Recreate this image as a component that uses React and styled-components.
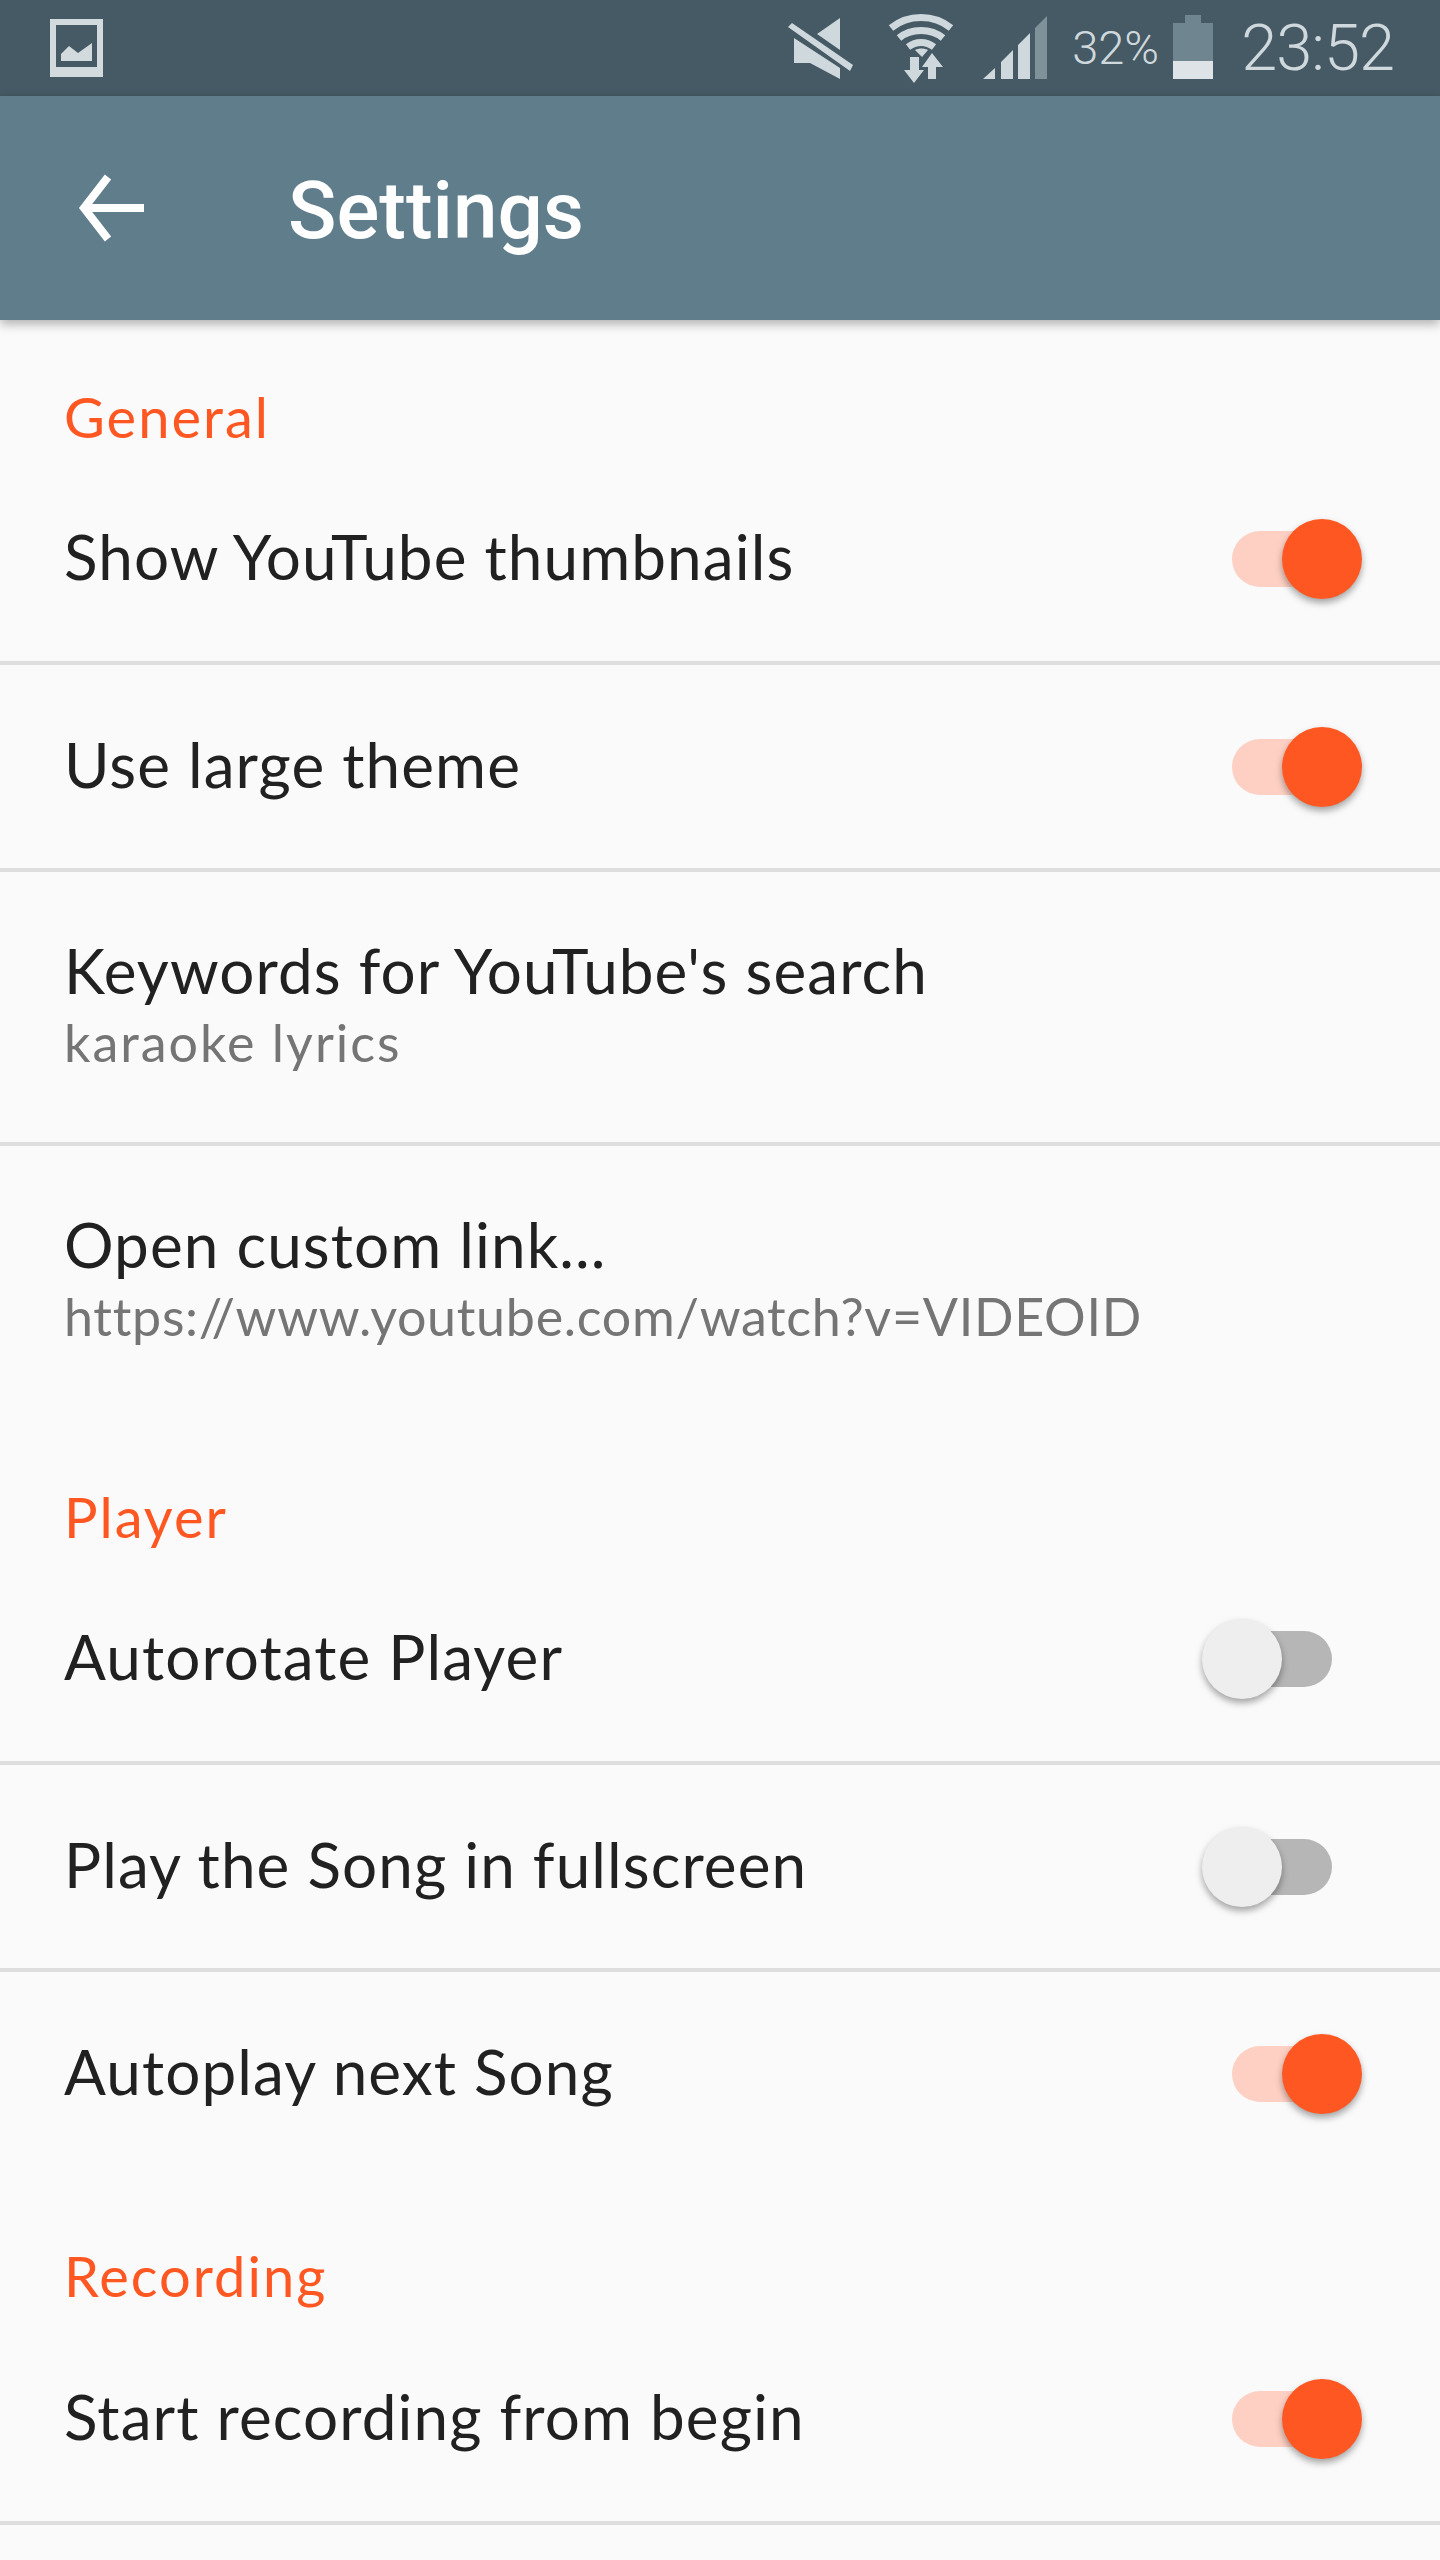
import React from 'react';
import styled, { createGlobalStyle } from 'styled-components';

const Global = createGlobalStyle`
  html, body { margin: 0; padding: 0; background: #fafafa; }
  #root { width: 1440px; height: 2560px; overflow: hidden; }
`;
const Page = styled.div`
  width: 1440px; height: 2560px; background: #fafafa; overflow: hidden;
  font-family: Lato, "Open Sans", sans-serif; color: #212121;
`;
const StatusBar = styled.div`
  height: 96px; background: #455a64; display: flex; align-items: center;
  padding: 0 46px 0 50px; color: #cfd8dc;
`;
const StatusRight = styled.div`
  margin-left: auto; display: flex; align-items: center;
`;
const Percent = styled.span`
  font: 300 47px/96px Roboto, sans-serif; margin: 0 15px 0 24px; color: #cfd8dc; width: 86px; white-space: nowrap;
`;
const Clock = styled.span`
  font: 300 65px/96px Roboto, sans-serif; margin-left: 28px; color: #cfd8dc; letter-spacing: -1px; white-space: nowrap;
`;
const Toolbar = styled.header`
  height: 224px; background: #607d8b; display: flex; align-items: center;
  padding: 0 0 0 78px; box-shadow: 0 4px 10px rgba(0,0,0,.3); position: relative;
`;
const Title = styled.h1`
  margin: 6px 0 0 144px; font: 500 80px/1 Roboto, sans-serif; color: #fff;
`;
const Section = styled.section``;
const SectionTitle = styled.h2`
  margin: 0; font: 400 56px/65px Lato, sans-serif; color: #ff5722; height: 137px;
  padding: 64px 64px 0; box-sizing: border-box; letter-spacing: 2px;
`;
const Row = styled.div`
  height: ${p => p.$h}px; box-sizing: border-box; padding: 0 78px 0 64px;
  display: flex; align-items: center; justify-content: space-between;
  border-bottom: 4px solid ${p => p.$last ? 'transparent' : '#dedede'};
`;
const RowText = styled.div`display: flex; flex-direction: column; margin-bottom: 7px;`;
const Label = styled.div`font-size: 62px; line-height: 70px; letter-spacing: 1.1px; margin-bottom: ${p => p.$stack ? 0 : 6}px;`;
const Sub = styled.div`font-size: 52px; line-height: 60px; color: #757575; margin-top: 7px; letter-spacing: ${p => p.$ls}px;`;
const SwitchBox = styled.div`
  width: 160px; height: 80px; position: relative; flex: none;
`;
const Track = styled.div`
  position: absolute; top: 12px; left: 30px; width: 100px; height: 56px; border-radius: 28px;
  background: ${p => p.$on ? '#fed0c3' : '#b6b6b6'};
`;
const Knob = styled.div`
  position: absolute; top: 0; width: 80px; height: 80px; border-radius: 50%;
  left: ${p => p.$on ? '80px' : '0'};
  background: ${p => p.$on ? '#ff5722' : '#eeeeee'};
  box-shadow: 0 4px 7px rgba(0,0,0,.35);
`;
const Switch = ({ on }) => (
  <SwitchBox><Track $on={on} /><Knob $on={on} /></SwitchBox>
);
const Svg = styled.svg`display: block; flex: none; margin-left: ${p => p.$ml || 0}px;`;

const Gallery = () => (
  <Svg width="53" height="96" viewBox="50 0 53 96" fill="#d3dadd">
    <path fillRule="evenodd" d="M50 19h53v58H50zM56 25v42h41V25z"/>
    <path d="M61 61v-7l8-8 9 7 14-10v18z"/>
  </Svg>
);
const Back = () => (
  <Svg width="66" height="70" viewBox="0 0 66 70" fill="none" stroke="#fff" strokeWidth="8">
    <path d="M66 35H6" />
    <path d="M30 4L6 35l24 31" />
  </Svg>
);
const Mute = () => (
  <Svg width="66" height="96" viewBox="788 0 66 96" fill="#cfd8dc">
    <path d="M788 27l4-4 61 42-3 6z"/>
    <path d="M840 18v32l-23-16z"/>
    <path d="M794 38l46 30v11l-30-16h-16z"/>
  </Svg>
);
const Wifi = () => (
  <Svg $ml={34} width="66" height="96" viewBox="888 0 66 96" fill="#cfd8dc">
    <g fill="none" stroke="#cfd8dc" strokeWidth="7">
      <path d="M891 28c17-14 43-14 60 0" />
      <path d="M899 38c12-10 32-10 44 0" />
      <path d="M908 47c8-6 18-6 26 0" />
    </g>
    <path d="M915 50c4-2 9-2 13 0l-6 7z"/>
    <path d="M910 57h9v13h5l-10 13-10-13h6z"/>
    <path d="M932 53l11 14h-7v12h-8V67h-6z"/>
  </Svg>
);
const Signal = () => (
  <Svg $ml={29} width="65" height="96" viewBox="985 0 65 96">
    <path fill="#cfd8dc" d="M985 79l12-11v11zM1003 79V62l12-12v29zM1020 79V45l12-12v46z"/>
    <path fill="#7f9199" d="M1037 79V28l12-12v63z"/>
  </Svg>
);
const Battery = () => (
  <Svg width="40" height="96" viewBox="0 0 40 96">
    <path fill="#6f858f" d="M12 15h16v8h12v38H0V23h12z"/>
    <path fill="#dde3e7" d="M0 61h40v18H0z"/>
  </Svg>
);

export default function App() {
  return (
    <Page>
      <Global />
      <StatusBar>
        <Gallery />
        <StatusRight>
          <Mute />
          <Wifi />
          <Signal />
          <Percent>32%</Percent>
          <Battery />
          <Clock>23:52</Clock>
        </StatusRight>
      </StatusBar>
      <Toolbar>
        <Back />
        <Title>Settings</Title>
      </Toolbar>
      <Section>
        <SectionTitle>General</SectionTitle>
        <Row $h={208}><Label>Show YouTube thumbnails</Label><Switch on /></Row>
        <Row $h={207}><Label>Use large theme</Label><Switch on /></Row>
        <Row $h={274}><RowText><Label $stack>Keywords for YouTube's search</Label><Sub $ls={2}>karaoke lyrics</Sub></RowText></Row>
        <Row $h={274} $last><RowText><Label $stack>Open custom link...</Label><Sub $ls={0.7}>https://www.youtube.com/watch?v=VIDEOID</Sub></RowText></Row>
      </Section>
      <Section>
        <SectionTitle>Player</SectionTitle>
        <Row $h={208}><Label>Autorotate Player</Label><Switch /></Row>
        <Row $h={207}><Label>Play the Song in fullscreen</Label><Switch /></Row>
        <Row $h={207} $last><Label>Autoplay next Song</Label><Switch on /></Row>
      </Section>
      <Section>
        <SectionTitle>Recording</SectionTitle>
        <Row $h={209}><Label>Start recording from begin</Label><Switch on /></Row>
      </Section>
    </Page>
  );
}
